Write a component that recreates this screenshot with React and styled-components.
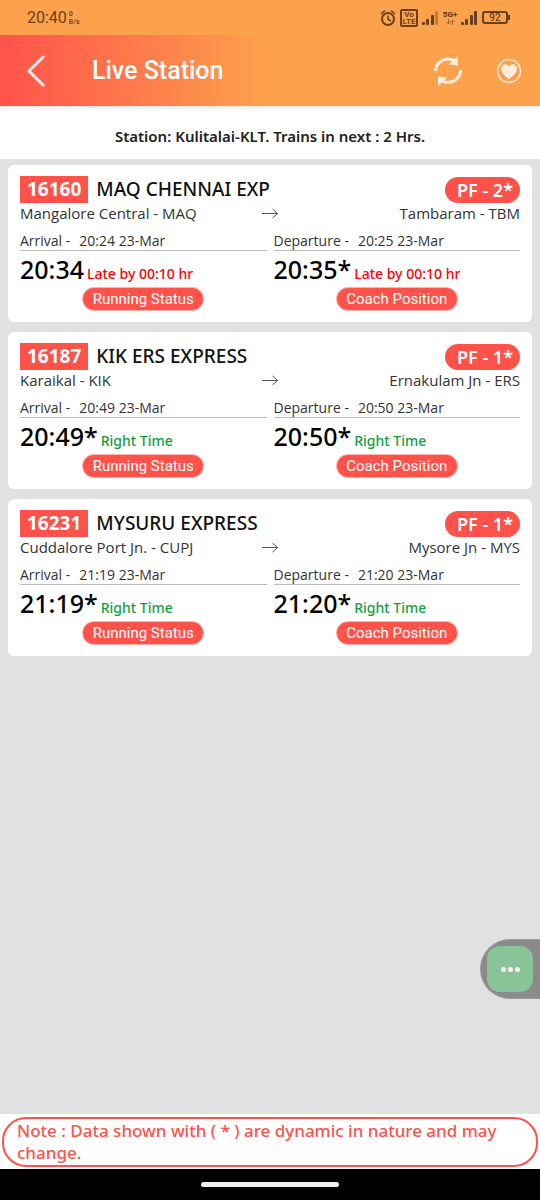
import React from 'react'
import styled, { createGlobalStyle } from 'styled-components'

const trains = [
    {
        number: '16160', name: 'MAQ CHENNAI EXP', platform: 'PF - 2*',
        from: 'Mangalore Central - MAQ', to: 'Tambaram - TBM',
        arrival: { planned: '20:24 23-Mar', actual: '20:34', status: 'Late by 00:10 hr', late: true },
        departure: { planned: '20:25 23-Mar', actual: '20:35*', status: 'Late by 00:10 hr', late: true },
    },
    {
        number: '16187', name: 'KIK ERS EXPRESS', platform: 'PF - 1*',
        from: 'Karaikal - KIK', to: 'Ernakulam Jn - ERS',
        arrival: { planned: '20:49 23-Mar', actual: '20:49*', status: 'Right Time' },
        departure: { planned: '20:50 23-Mar', actual: '20:50*', status: 'Right Time' },
    },
    {
        number: '16231', name: 'MYSURU EXPRESS', platform: 'PF - 1*',
        from: 'Cuddalore Port Jn. - CUPJ', to: 'Mysore Jn - MYS',
        arrival: { planned: '21:19 23-Mar', actual: '21:19*', status: 'Right Time' },
        departure: { planned: '21:20 23-Mar', actual: '21:20*', status: 'Right Time' },
    },
];

function Signal({ weak }) {
    return (
        <svg width="17" height="15" viewBox="0 0 17 15" fill="#68401c">
            <rect x="0" y="12" width="3" height="3" rx="1" />
            <rect x="4" y="9" width="3" height="6" rx="1" />
            <rect x="9" y="5" width="3" height="10" rx="1" />
            <rect x="13" y="1" width="3" height="14" rx="1" opacity={weak ? 0.4 : 1} />
        </svg>
    )
}

function StatusIcons() {
    return (
        <Icons>
            <svg width="16" height="18" viewBox="0 0 16 18" fill="none" stroke="#68401c" strokeWidth="2">
                <circle cx="8" cy="10" r="6" />
                <path d="M8 6.500v4l3 1.500M1 5l4-3.500M15 5l-4-3.500" strokeWidth="1.500" />
            </svg>
            <Volte><span>Vo</span><span>LTE</span></Volte>
            <Signal weak />
            <Network>
                <span>5G+</span>
                <svg width="9" height="6" viewBox="0 0 9 6" fill="none" stroke="#a0662f">
                    <path d="M2.500 0v5M.500 3l2 2 2-2M6.500 6V1M4.500 3l2-2 2 2" />
                </svg>
            </Network>
            <Signal />
            <Battery>92</Battery>
        </Icons>
    )
}

function Timing({ label, info, action }) {
    return (
        <TimingBox>
            <Planned><span>{label} -</span><span>{info.planned}</span></Planned>
            <Actual>
                <Clock>{info.actual}</Clock>
                <Status $late={info.late}>{info.status}</Status>
            </Actual>
            <Action type="button">{action}</Action>
        </TimingBox>
    )
}

function TrainCard({ train }) {
    return (
        <Card>
            <CardTop>
                <Number>{train.number}</Number>
                <Name>{train.name}</Name>
                <Platform>{train.platform}</Platform>
            </CardTop>
            <Route>
                <span>{train.from}</span>
                <svg width="18" height="12" viewBox="0 0 18 12" fill="none" stroke="#555">
                    <path d="M1 6.500h15.500M11.500 2l5 4.500-5 4.500" />
                </svg>
                <Destination>{train.to}</Destination>
            </Route>
            <Timings>
                <Timing label="Arrival" info={train.arrival} action="Running Status" />
                <Timing label="Departure" info={train.departure} action="Coach Position" />
            </Timings>
        </Card>
    )
}

export default function App() {
    return (
        <Page>
            <GlobalStyle />
            <StatusBar>
                <Time>20:40</Time>
                <Speed><span>0</span><span>B/s</span></Speed>
                <StatusIcons />
            </StatusBar>
            <Header>
                <IconButton type="button" aria-label="Back">
                    <svg width="18" height="32" viewBox="0 0 18 32" fill="none" stroke="#ffe9e3" strokeWidth="3" strokeLinecap="round" strokeLinejoin="round">
                        <path d="M16 2L2 16l14 14" />
                    </svg>
                </IconButton>
                <Title>Live Station</Title>
                <HeaderActions>
                    <IconButton type="button" aria-label="Refresh">
                        <svg width="30" height="30" viewBox="0 0 30 30">
                            <g fill="none" stroke="#ffeddd" strokeWidth="3">
                                <path d="M2.500 15A12.500 12.500 0 0 1 21.500 5" />
                                <path d="M27.500 14A12.500 12.500 0 0 1 8.500 24.500" />
                            </g>
                            <path fill="#ffeddd" d="M25 0v9.500l-9.500-1zM5 30v-9.500l9.500 1z" />
                        </svg>
                    </IconButton>
                    <IconButton type="button" aria-label="Favourite">
                        <svg width="26" height="26" viewBox="0 0 26 26">
                            <circle cx="13" cy="13" r="11.400" fill="none" stroke="#ffeddd" strokeWidth="1.500" />
                            <path fill="#ffeddd" d="M13 21C8.500 17.300 5 14.800 5 11c0-5 6-6.200 8-2.500C15 4.800 21 6 21 11c0 3.800-3.500 6.300-8 10z" />
                        </svg>
                    </IconButton>
                </HeaderActions>
            </Header>
            <Station>Station: Kulitalai-KLT. Trains in next : 2 Hrs.</Station>
            <List>
                {trains.map((train) => <TrainCard key={train.number} train={train} />)}
            </List>
            <Footer>
                <Note>Note : Data shown with ( * ) are dynamic in nature and may change.</Note>
            </Footer>
            <NavBar><Handle /></NavBar>
            <Drawer>
                <MoreButton type="button" aria-label="More">
                    <Dot /><Dot /><Dot />
                </MoreButton>
            </Drawer>
        </Page>
    )
}

const GlobalStyle = createGlobalStyle`
    * {
        box-sizing: border-box;
    }
    body {
        margin: 0;
        font-family: "Noto Sans", sans-serif;
    }
    button {
        border: none;
        padding: 0;
        cursor: pointer;
    }
    svg {
        display: block;
        flex-shrink: 0;
    }
`;

const Page = styled.div`
    position: relative;
    display: flex;
    flex-direction: column;
    min-height: 100vh;
    background: #e1e1e1;
`;

const StatusBar = styled.div`
    display: flex;
    align-items: center;
    height: 35px;
    padding: 0 32px 0 27px;
    background: #fda24c;
    color: #68401c;
    font-family: Roboto, sans-serif;
`;

const Time = styled.span`
    font-size: 16px;
`;

const Speed = styled.span`
    display: flex;
    flex-direction: column;
    margin-left: 2px;
    font-size: 7px;
    line-height: 8px;
    font-weight: 500;
`;

const Icons = styled.div`
    display: flex;
    align-items: center;
    gap: 4px;
    margin-left: auto;
`;

const Volte = styled.span`
    display: flex;
    flex-direction: column;
    align-items: center;
    width: 18px;
    height: 18px;
    border: 2px solid #68401c;
    border-radius: 2px;
    font-size: 8px;
    line-height: 7px;
    font-weight: 700;
`;

const Network = styled.span`
    display: flex;
    flex-direction: column;
    align-items: center;
    width: 14px;
    font-size: 8px;
    line-height: 9px;
    font-weight: 900;
`;

const Battery = styled.span`
    position: relative;
    width: 26px;
    height: 13px;
    border: 2px solid #68401c;
    border-radius: 3px;
    font-size: 10px;
    line-height: 10px;
    font-weight: 500;
    text-align: center;
    &:after {
        content: "";
        position: absolute;
        top: 2px;
        right: -4px;
        width: 2px;
        height: 5px;
        background: #68401c;
    }
`;

const Header = styled.header`
    display: flex;
    align-items: center;
    height: 71px;
    padding: 0 18px 0 27px;
    background: linear-gradient(to right, #ff524b, #fda24c 50%);
`;

const IconButton = styled.button`
    background: none;
`;

const Title = styled.h1`
    margin: 0 0 0 47px;
    color: #ffffff;
    font-family: Roboto, sans-serif;
    font-size: 25px;
    font-weight: 500;
`;

const HeaderActions = styled.div`
    display: flex;
    align-items: center;
    gap: 33px;
    margin-left: auto;
`;

const Station = styled.div`
    height: 53px;
    padding-top: 6px;
    background: linear-gradient(#ededed, #ffffff 5px);
    color: #212121;
    font-size: 15px;
    font-weight: 600;
    line-height: 48px;
    text-align: center;
`;

const List = styled.main`
    display: flex;
    flex-direction: column;
    flex: 1;
    gap: 10px;
    padding: 6px 8px;
`;

const Card = styled.article`
    padding: 11px 12px;
    background: #ffffff;
    border-radius: 6px;
`;

const CardTop = styled.div`
    display: flex;
    align-items: center;
    height: 27px;
`;

const Number = styled.span`
    padding: 0 7px;
    background: #ff524b;
    color: #ffffff;
    font-size: 19px;
    font-weight: 700;
    line-height: 27px;
`;

const Name = styled.h2`
    margin: 0 0 0 8px;
    color: #111111;
    font-size: 19px;
    font-weight: 500;
    line-height: 27px;
`;

const Platform = styled.span`
    margin-left: auto;
    padding: 0 7px 0 12px;
    background: #ff524b;
    border-radius: 13px;
    color: #ffffff;
    font-size: 18px;
    font-weight: 600;
    line-height: 26px;
`;

const Route = styled.div`
    display: grid;
    grid-template-columns: 1fr auto 1fr;
    align-items: center;
    color: #333333;
    font-family: "Open Sans", sans-serif;
    font-size: 15px;
    line-height: 20px;
`;

const Destination = styled.span`
    text-align: right;
`;

const Timings = styled.div`
    display: grid;
    grid-template-columns: 1fr 1fr;
    gap: 7px;
    margin-top: 9px;
`;

const TimingBox = styled.div`
    display: flex;
    flex-direction: column;
`;

const Planned = styled.div`
    display: flex;
    gap: 9px;
    border-bottom: 1px solid #bbbbbb;
    color: #333333;
    font-family: "Open Sans", sans-serif;
    font-size: 14px;
    line-height: 18px;
`;

const Actual = styled.div`
    display: flex;
    align-items: baseline;
    gap: 3px;
    height: 36px;
    line-height: 36px;
`;

const Clock = styled.span`
    color: #000000;
    font-size: 25px;
    font-weight: 500;
`;

const Status = styled.span`
    color: ${(props) => (props.$late ? '#ff0000' : '#12a03f')};
    font-size: 14px;
    font-weight: 500;
`;

const Action = styled.button`
    align-self: center;
    width: 122px;
    height: 24px;
    background: #ff524b;
    border: 1px solid #ffb3b0;
    border-radius: 12px;
    color: #ffffff;
    font-family: Roboto, sans-serif;
    font-size: 15px;
    line-height: 20px;
`;

const Footer = styled.footer`
    padding: 3px 2px 2px;
    background: #ffffff;
`;

const Note = styled.p`
    margin: 0;
    padding: 1px 13px;
    border: 2px solid #ff524b;
    border-radius: 24px;
    color: #ff524b;
    font-size: 17px;
    font-weight: 500;
    line-height: 22px;
`;

const NavBar = styled.div`
    display: flex;
    justify-content: center;
    align-items: center;
    height: 31px;
    background: #000000;
`;

const Handle = styled.div`
    width: 138px;
    height: 5px;
    border-radius: 3px;
    background: #eeeeee;
`;

const Drawer = styled.div`
    position: absolute;
    right: 0;
    bottom: 201px;
    padding: 6px 7px 6px 6px;
    background: #8a8a8a;
    border: 1px solid #9a9a9a;
    border-right: none;
    border-radius: 30px 0 0 30px;
`;

const MoreButton = styled.button`
    display: flex;
    align-items: center;
    justify-content: center;
    gap: 2px;
    width: 46px;
    height: 46px;
    background: #88c497;
    border-radius: 13px;
`;

const Dot = styled.span`
    width: 5px;
    height: 5px;
    border-radius: 50%;
    background: #f5f5f5;
`;
